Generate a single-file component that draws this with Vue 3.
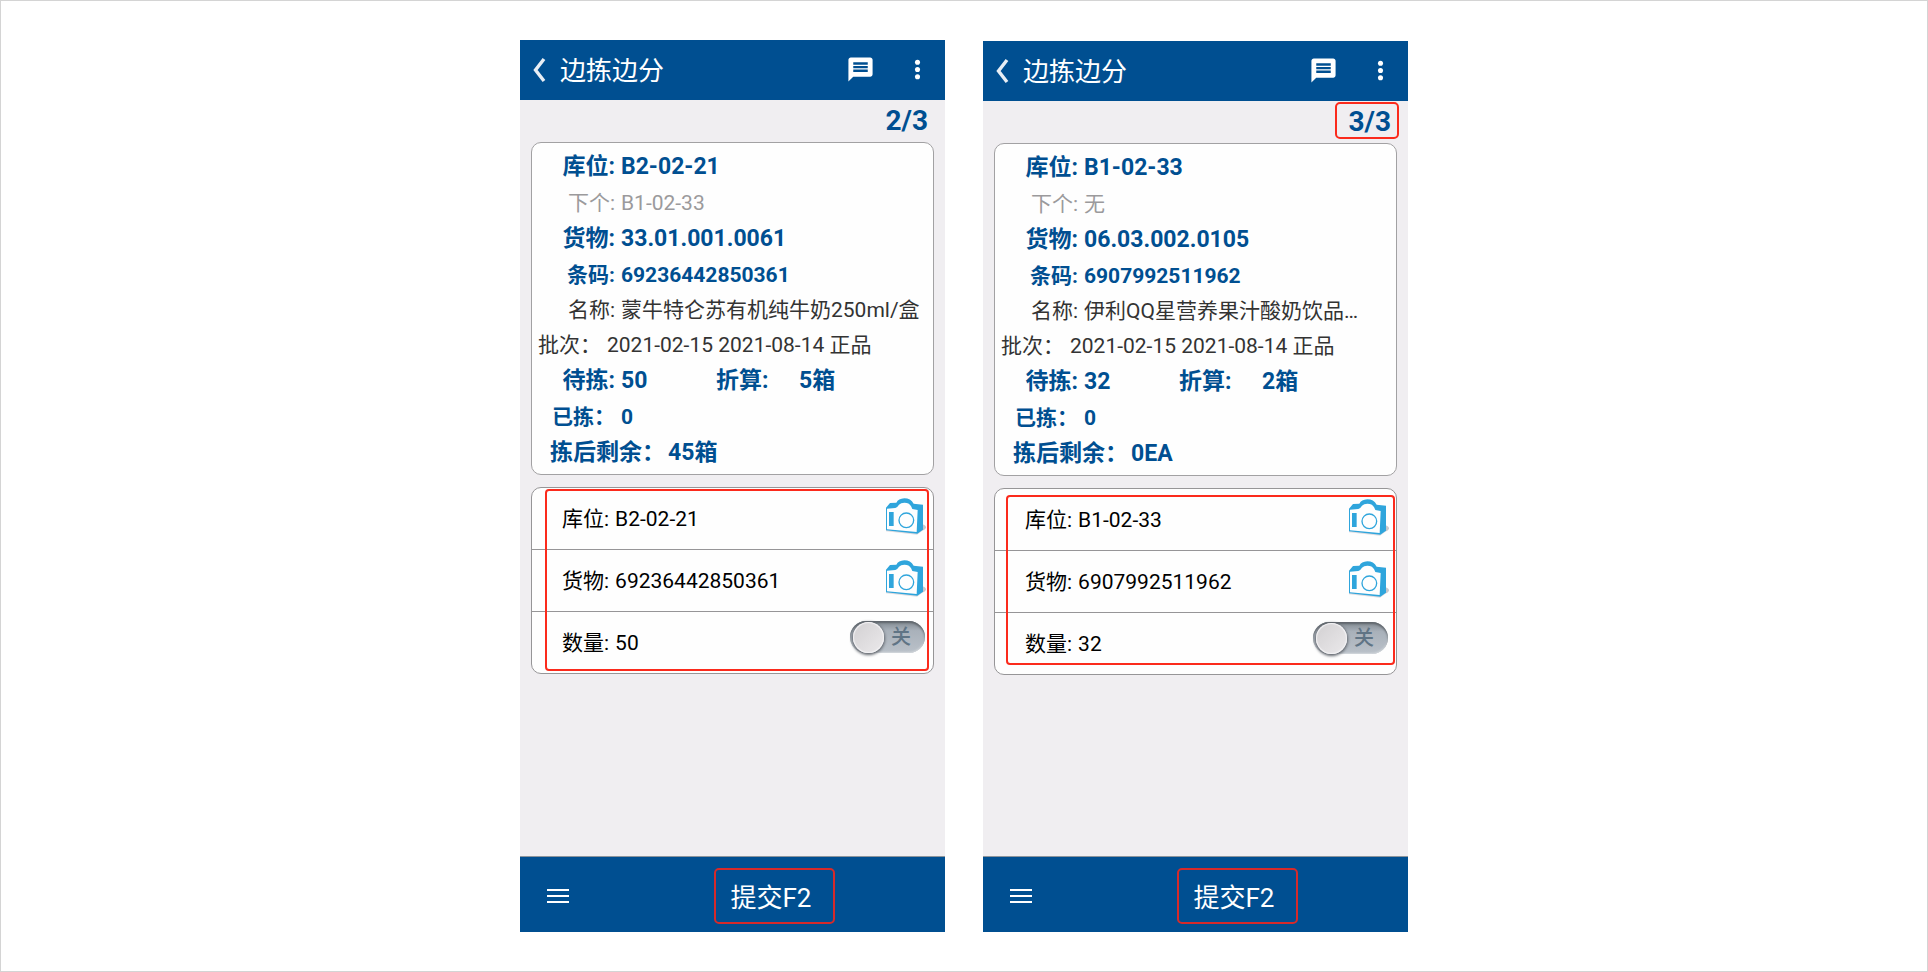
<template>
  <main class="page">
    <section v-for="(task, i) in tasks" :key="task.id" class="phone" :class="'phone-' + task.id">
      <header class="topbar">
        <button type="button" class="icon-btn back" aria-label="返回">
          <svg width="14" height="26" viewBox="0 0 14 26">
            <path d="M12 2 3.5 13 12 24" fill="none" stroke="#e8eef5" stroke-width="3.4" />
          </svg>
        </button>
        <h1 class="title">边拣边分</h1>
        <button type="button" class="icon-btn action message" aria-label="消息">
          <svg width="29" height="29" viewBox="0 0 24 24">
            <path
              fill="#fff"
              d="M20 2H4c-1.1 0-1.99.9-1.99 2L2 22l4-4h14c1.1 0 2-.9 2-2V4c0-1.1-.9-2-2-2zm-2 12H6v-2h12v2zm0-3H6V9h12v2zm0-3H6V6h12v2z"
            />
          </svg>
        </button>
        <button type="button" class="icon-btn action" aria-label="更多">
          <svg width="29" height="29" viewBox="0 0 24 24" fill="#fff">
            <circle cx="12" cy="6" r="2.1" />
            <circle cx="12" cy="12" r="2.1" />
            <circle cx="12" cy="18" r="2.1" />
          </svg>
        </button>
      </header>

      <div class="content">
        <div class="progress">
          <span class="count" :class="{ marked: task.markCount }">{{ task.count }}</span>
        </div>

        <div class="card info">
          <div class="row large"><span class="label">库位:</span><span>{{ task.location }}</span></div>
          <div class="row muted"><span class="label">下个:</span><span>{{ task.next }}</span></div>
          <div class="row large"><span class="label">货物:</span><span>{{ task.goods }}</span></div>
          <div class="row strong"><span class="label">条码:</span><span>{{ task.barcode }}</span></div>
          <div class="row plain"><span class="label">名称:</span><span class="name">{{ task.name }}</span></div>
          <div class="row plain"><span>批次：</span><span>{{ task.batch }}</span></div>
          <div class="row large">
            <span class="label">待拣:</span><span class="todo">{{ task.todo }}</span>
            <span class="convert">折算:</span><span>{{ task.convert }}</span>
          </div>
          <div class="row strong"><span class="label">已拣：</span><span>{{ task.done }}</span></div>
          <div class="row large remain"><span>拣后剩余：</span><span>{{ task.remain }}</span></div>
        </div>

        <form class="card entry" @submit.prevent>
          <div class="field">
            <label :for="'location' + i">库位:</label>
            <input :id="'location' + i" v-model="task.location" type="text" />
            <button type="button" class="icon-btn camera" aria-label="扫描库位">
              <svg width="41" height="37" viewBox="0 0 123 111">
                <ellipse cx="106" cy="88" rx="17" ry="10" fill="#c9c7cb" />
                <path d="M3 100 96 110 112 98V90H3z" fill="#dddbdf" />
                <path d="M3 29 15 15 34 14Q40 2 58 1 77 1 86 17L114 20V95L97 107 3 97z" fill="#2fa5dc" />
                <path d="M6 32 31 30Q38 27 42 20 49 13 65 15 76 17 82 33L98 36 95 102 6 94z" fill="#fefefe" />
                <path d="M12 42h14v42H12z" fill="#2fa5dc" />
                <circle cx="64" cy="67" r="22" fill="none" stroke="#2fa5dc" stroke-width="4" />
              </svg>
            </button>
          </div>
          <div class="field">
            <label :for="'goods' + i">货物:</label>
            <input :id="'goods' + i" v-model="task.barcode" type="text" />
            <button type="button" class="icon-btn camera" aria-label="扫描货物">
              <svg width="41" height="37" viewBox="0 0 123 111">
                <ellipse cx="106" cy="88" rx="17" ry="10" fill="#c9c7cb" />
                <path d="M3 100 96 110 112 98V90H3z" fill="#dddbdf" />
                <path d="M3 29 15 15 34 14Q40 2 58 1 77 1 86 17L114 20V95L97 107 3 97z" fill="#2fa5dc" />
                <path d="M6 32 31 30Q38 27 42 20 49 13 65 15 76 17 82 33L98 36 95 102 6 94z" fill="#fefefe" />
                <path d="M12 42h14v42H12z" fill="#2fa5dc" />
                <circle cx="64" cy="67" r="22" fill="none" stroke="#2fa5dc" stroke-width="4" />
              </svg>
            </button>
          </div>
          <div class="field">
            <label :for="'qty' + i">数量:</label>
            <input :id="'qty' + i" v-model="task.todo" type="text" />
            <label class="switch">
              <input v-model="task.auto" type="checkbox" aria-label="数量开关" />
              <span class="knob"></span>
              <span class="state">{{ task.auto ? '开' : '关' }}</span>
            </label>
          </div>
          <div class="mark"></div>
        </form>
      </div>

      <footer class="bottombar">
        <button type="button" class="icon-btn menu" aria-label="菜单">
          <svg width="22" height="16" viewBox="0 0 22 16">
            <path d="M0 2h22M0 8h22M0 14h22" stroke="#fff" stroke-width="2" />
          </svg>
        </button>
        <button type="button" class="submit">提交F2</button>
      </footer>
    </section>
  </main>
</template>

<script setup>
import { ref } from 'vue'

const tasks = ref([
  {
    id: 'second',
    count: '2/3',
    markCount: false,
    location: 'B2-02-21',
    next: 'B1-02-33',
    goods: '33.01.001.0061',
    barcode: '69236442850361',
    name: '蒙牛特仑苏有机纯牛奶250ml/盒',
    batch: '2021-02-15 2021-08-14 正品',
    todo: '50',
    convert: '5箱',
    done: '0',
    remain: '45箱',
    auto: false
  },
  {
    id: 'third',
    count: '3/3',
    markCount: true,
    location: 'B1-02-33',
    next: '无',
    goods: '06.03.002.0105',
    barcode: '6907992511962',
    name: '伊利QQ星营养果汁酸奶饮品…',
    batch: '2021-02-15 2021-08-14 正品',
    todo: '32',
    convert: '2箱',
    done: '0',
    remain: '0EA',
    auto: false
  }
])
</script>

<style>
body {
  background: #fff;
}
</style>

<style scoped>
* {
  box-sizing: border-box;
}

.page {
  display: flex;
  justify-content: center;
  gap: 38px;
  min-height: 100vh;
  padding: 39px 16px;
  border: 1px solid #d4d4d4;
  font-family: Roboto, "Noto Sans CJK SC", sans-serif;
  font-size: 21px;
  color: #333;
}

.phone {
  display: flex;
  flex-direction: column;
  flex: 0 1 425px;
  min-width: 0;
  background: #f0eef1;
}

.phone-third {
  margin-top: 1px;
}

button {
  font: inherit;
  cursor: pointer;
}

.icon-btn {
  display: flex;
  padding: 0;
  border: none;
  background: none;
}

.topbar {
  display: flex;
  align-items: center;
  height: 60px;
  padding: 0 13px 0 12px;
  background: #004f91;
}

.title {
  flex: 1;
  margin: 2px 0 0 14px;
  font-size: 26px;
  font-weight: 400;
  line-height: 36px;
  color: #fff;
}

.action {
  margin-bottom: 2px;
}

.message {
  margin-right: 28px;
}

.content {
  flex: 1;
  padding: 0 11px;
}

.progress {
  display: flex;
  justify-content: flex-end;
  height: 42px;
  padding-top: 1px;
  margin-right: -2px;
}

.count {
  height: 37px;
  padding: 0 6px 0 11px;
  border: 2px solid transparent;
  border-radius: 5px;
  font-size: 28px;
  font-weight: 700;
  line-height: 36px;
  color: #004f91;
}

.count.marked {
  border-color: #fb2a1c;
}

.card {
  border: 1px solid #a2a1a3;
  border-radius: 10px;
  background: #fefefe;
}

.info {
  padding: 6px 4px 3px 6px;
}

.row {
  display: flex;
  gap: 6px;
  height: 36px;
  line-height: 36px;
  white-space: nowrap;
}

.plain {
  height: 35px;
  line-height: 35px;
}

.label {
  flex: none;
  width: 77px;
  text-align: right;
}

.name {
  overflow: hidden;
  text-overflow: ellipsis;
}

.muted {
  color: #9b9a9c;
}

.strong,
.large {
  font-weight: 700;
  color: #004f91;
}

.large {
  font-size: 23px;
}

.todo {
  width: 89px;
}

.convert {
  width: 77px;
}

.remain {
  gap: 3px;
  padding-left: 12px;
}

.entry {
  position: relative;
  margin-top: 12px;
  border-color: #969597;
}

.field {
  display: flex;
  align-items: center;
  height: 61px;
  padding: 0 7px 0 30px;
  line-height: 36px;
  color: #000;
}

.field + .field {
  height: 62px;
  border-top: 1px solid #969597;
}

.field input[type="text"] {
  flex: 1;
  min-width: 0;
  height: 36px;
  margin-left: 6px;
  padding: 0;
  border: none;
  outline: none;
  background: none;
  font: inherit;
  color: inherit;
}

.camera {
  margin-bottom: 5px;
}

.switch {
  position: relative;
  display: flex;
  align-items: center;
  justify-content: flex-end;
  width: 75px;
  height: 32px;
  margin: 0 1px 12px 0;
  padding-right: 14px;
  border-radius: 16px;
  background: linear-gradient(#808890, #a9b1ba 30%, #bac1c9);
  box-shadow: inset 0 2px 2px #60666c, inset 0 -1px 2px #d5d9dd;
  cursor: pointer;
}

.switch input {
  position: absolute;
  inset: 0;
  margin: 0;
  opacity: 0;
}

.knob {
  position: absolute;
  left: 3px;
  top: 1px;
  width: 31px;
  height: 31px;
  border-radius: 50%;
  background: linear-gradient(135deg, #d2d0d2, #ebe9eb);
  box-shadow: inset 0 0 1px 1px #f4f3f5, 0 1px 3px 1px #60656c;
}

.state {
  font-size: 20px;
  font-weight: 500;
  line-height: 32px;
  color: #607485;
}

.mark {
  position: absolute;
  inset: 1px 4px 2px 13px;
  border: 2px solid #fb2a1c;
  border-radius: 4px;
  pointer-events: none;
}

.phone-third .mark {
  inset: 6px 1px 9px 11px;
}

.bottombar {
  display: flex;
  align-items: center;
  height: 76px;
  padding-top: 3px;
  border-top: 1px solid #8c949c;
  background: #004f91;
}

.menu {
  width: 194px;
  padding-left: 27px;
}

.submit {
  width: 121px;
  height: 56px;
  padding: 0 7px 2px 0;
  border: 2px solid #d62a2a;
  border-radius: 5px;
  background: none;
  font-size: 26px;
  color: #fff;
}
</style>
